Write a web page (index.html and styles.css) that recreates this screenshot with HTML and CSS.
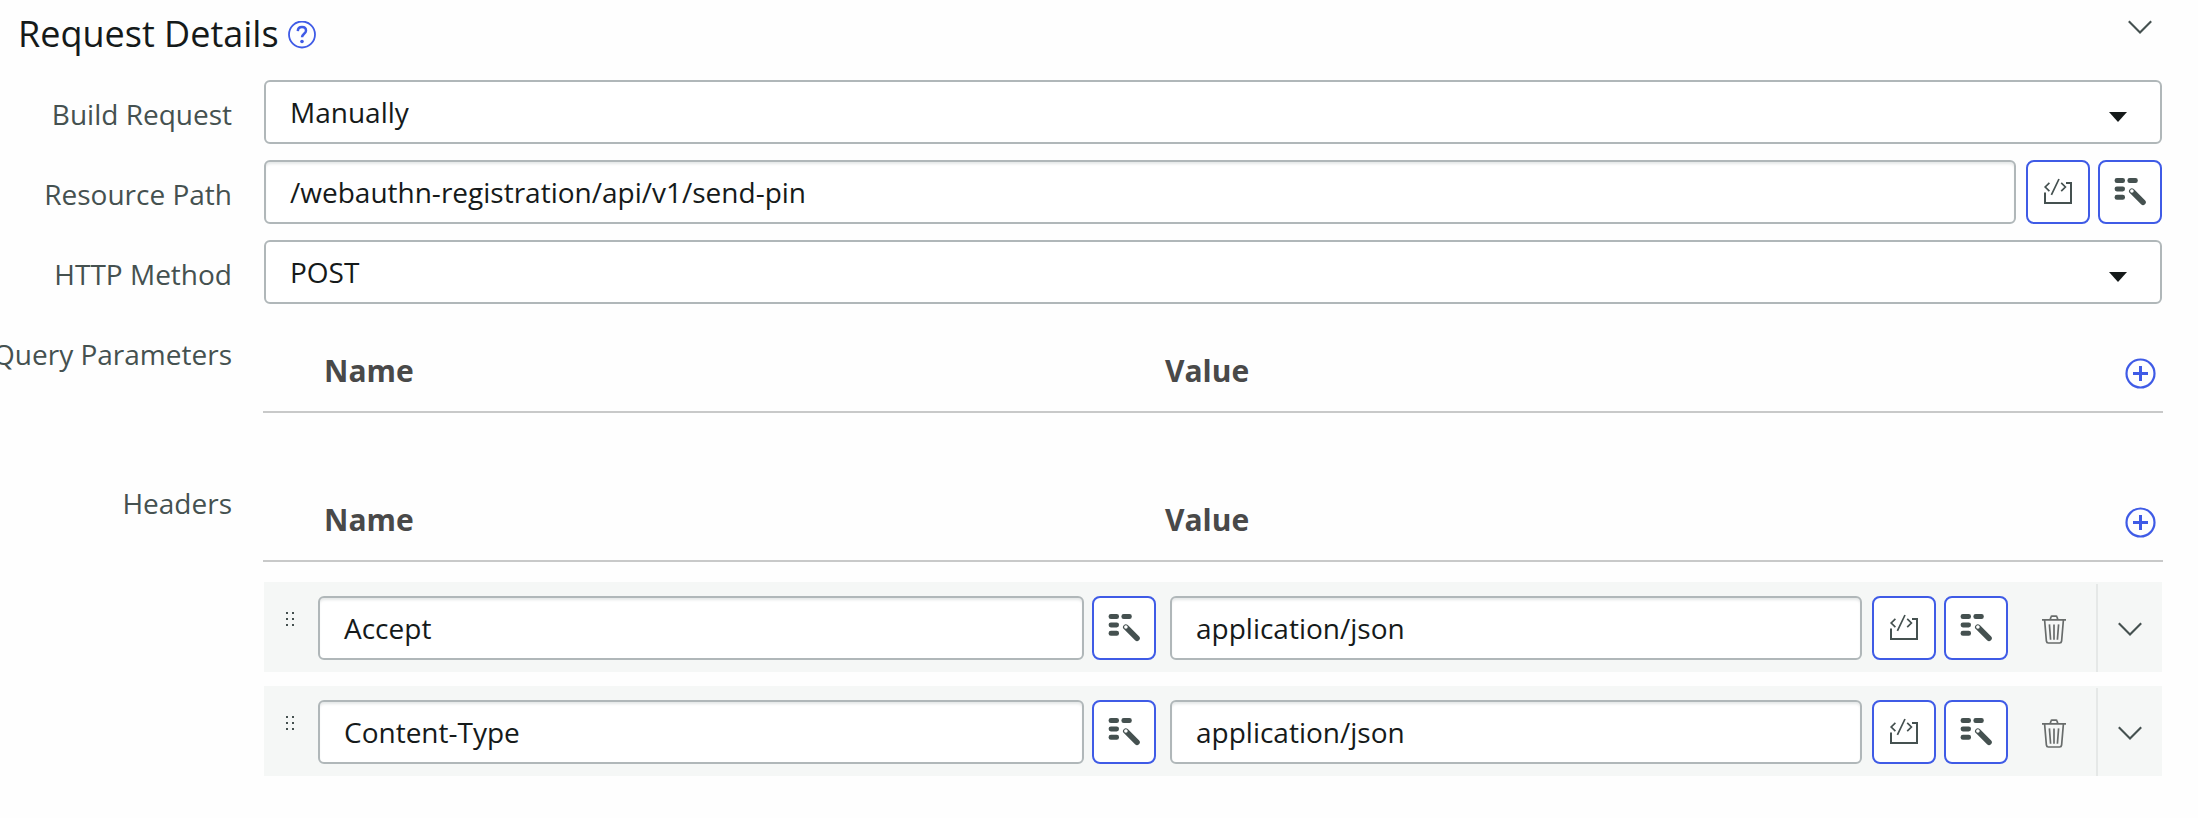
FILE: index.html
```
<!DOCTYPE html>
<html lang="en">
<head>
<meta charset="utf-8">
<title>Request Details</title>
<link rel="stylesheet" href="styles.css">
</head>
<body>
<svg class="sprite" aria-hidden="true">
  <symbol id="code" viewBox="0 0 60 60">
    <path d="M17 30.6V40.9H43V21H38" fill="none" stroke="#455150" stroke-width="2"/>
    <path d="M21.4 20.9L17.2 25L21.4 29.2M33.2 20.9L37.4 25L33.2 29.2M31 17L23.4 32.8" fill="none" stroke="#455150" stroke-width="1.7"/>
  </symbol>
  <symbol id="wand" viewBox="0 0 60 60">
    <g fill="#455150"><rect x="14.6" y="16" width="10.4" height="5" rx="2.3"/><rect x="27.4" y="16" width="10.4" height="5" rx="2.3"/><rect x="14.6" y="24.4" width="10.4" height="5" rx="2.3"/><rect x="14.6" y="32.8" width="10.4" height="5" rx="2.3"/></g>
    <path d="M31.8 29.1L43 40.2" stroke="#455150" stroke-width="5.6" stroke-linecap="round"/>
    <circle cx="31.9" cy="29" r="1.8" fill="#fff"/>
  </symbol>
  <symbol id="chevron" viewBox="0 0 24 14">
    <path d="M0.8 1.3L12 12.4L23.2 1.3" fill="none" stroke="#455150" stroke-width="2.1"/>
  </symbol>
  <symbol id="plus" viewBox="0 0 32 32">
    <circle cx="16.5" cy="16.5" r="14" fill="none" stroke="#3f5be6" stroke-width="2.2"/>
    <path d="M9 16.5H24M16.5 9V24" fill="none" stroke="#3f5be6" stroke-width="3"/>
  </symbol>
  <symbol id="trash" viewBox="0 0 24 30">
    <g fill="none" stroke="#686c6b" stroke-width="1.7"><path d="M0 4.8H24M8.2 4.6L9 2Q9.2 1.2 10 1.2H14Q14.8 1.2 15 2L15.8 4.6M2.6 5L4.4 26.2Q4.6 28 6.4 28H17.6Q19.4 28 19.6 26.2L21.4 5"/><path d="M7.4 9.4L8.6 24.8M12 9.4V24.8M16.6 9.4L15.4 24.8"/></g>
  </symbol>
  <symbol id="grip" viewBox="0 0 8 14">
    <path d="M0 0h2v2H0zM6 0h2v2H6zM0 6h2v2H0zM6 6h2v2H6zM0 12h2v2H0zM6 12h2v2H6z" fill="#455150"/>
  </symbol>
  <symbol id="caret" viewBox="0 0 18 10"><path d="M0 0H18L9 10Z" fill="#151a1a"/></symbol>
</svg>
<main class="panel">
  <header class="panel-head">
    <h1>Request Details</h1>
    <svg class="help" viewBox="0 0 28 28"><circle cx="14" cy="13.5" r="13" fill="none" stroke="#3f5be6" stroke-width="1.8"/><path d="M9.8 10.1C9.9 7.4 11.6 6.1 14 6.1C16.5 6.1 18 7.6 18 9.7C18 12.6 14 12.9 14 16.3" fill="none" stroke="#3f5be6" stroke-width="2.5"/><circle cx="14" cy="20.5" r="1.8" fill="#3f5be6"/></svg>
    <svg class="chevron"><use href="#chevron"/></svg>
  </header>
  <div class="form">
    <label>Build Request</label>
    <div class="select"><span>Manually</span><svg class="caret"><use href="#caret"/></svg></div>
    <label>Resource Path</label>
    <div class="line">
      <div class="input">/webauthn-registration/api/v1/send-pin</div>
      <div class="buttons"><button><svg><use href="#code"/></svg></button><button><svg><use href="#wand"/></svg></button></div>
    </div>
    <label>HTTP Method</label>
    <div class="select"><span>POST</span><svg class="caret"><use href="#caret"/></svg></div>
    <label>Query Parameters</label>
    <section class="table">
      <div class="thead"><b>Name</b><b>Value</b><svg class="plus"><use href="#plus"/></svg></div>
    </section>
    <label>Headers</label>
    <section class="table">
      <div class="thead"><b>Name</b><b>Value</b><svg class="plus"><use href="#plus"/></svg></div>
      <div class="trow">
        <svg class="grip"><use href="#grip"/></svg>
        <div class="input name">Accept</div>
        <button><svg><use href="#wand"/></svg></button>
        <div class="input value">application/json</div>
        <div class="buttons"><button><svg><use href="#code"/></svg></button><button><svg><use href="#wand"/></svg></button></div>
        <svg class="trash"><use href="#trash"/></svg>
        <div class="expand"><svg class="chevron"><use href="#chevron"/></svg></div>
      </div>
      <div class="trow">
        <svg class="grip"><use href="#grip"/></svg>
        <div class="input name">Content-Type</div>
        <button><svg><use href="#wand"/></svg></button>
        <div class="input value">application/json</div>
        <div class="buttons"><button><svg><use href="#code"/></svg></button><button><svg><use href="#wand"/></svg></button></div>
        <svg class="trash"><use href="#trash"/></svg>
        <div class="expand"><svg class="chevron"><use href="#chevron"/></svg></div>
      </div>
    </section>
  </div>
</main>
</body>
</html>
```
FILE: styles.css
```
* { box-sizing: border-box; }
body {
  margin: 0;
  background: #fefefe;
  color: #151a1a;
  font: 28px/38px "Open Sans", "Noto Sans", sans-serif;
  overflow: hidden;
}
svg { display: block; flex: none; }
.sprite { position: absolute; width: 0; height: 0; }
.panel { height: 818px; padding-right: 36px; }
.panel-head { display: flex; height: 80px; padding-left: 18px; }
h1 { margin: 9px 0 0; font-size: 36px; line-height: 50px; font-weight: 400; white-space: nowrap; }
.help { width: 28px; height: 28px; margin: 21px 0 0 9px; }
.chevron { width: 24px; height: 14px; }
.panel-head .chevron { margin: 20px 10px 0 auto; }
.form {
  display: grid;
  grid-template-columns: 232px 1898px;
  grid-template-rows: 64px 64px 64px 133px auto;
  column-gap: 32px;
  row-gap: 16px;
}
label { justify-self: end; padding-top: 15px; color: #455150; white-space: nowrap; }
.select, .input {
  height: 64px;
  border: 2px solid #b0b7b9;
  border-radius: 6px;
  background: #fff;
  padding: 11px 24px;
  white-space: nowrap;
}
.select { display: flex; justify-content: space-between; padding-right: 33px; }
.caret { width: 18px; height: 10px; margin-top: 19px; }
.input { flex: 1; box-shadow: inset 0 3px 3px -1px #e4e7e7; }
.line { display: flex; gap: 10px; }
.buttons { display: flex; gap: 8px; }
button {
  flex: none;
  width: 64px;
  height: 64px;
  padding: 0;
  border: 2px solid #3f5be6;
  border-radius: 8px;
  background: #fff;
}
button svg { width: 60px; height: 60px; }
.thead {
  display: grid;
  grid-template-columns: 841px 1fr 32px;
  height: 93px;
  margin: 0 -1px;
  padding: 30px 7px 0 61px;
  border-bottom: 2px solid #c8c9c9;
  color: #494949;
  font-size: 30px;
  line-height: 42px;
}
.plus { width: 32px; height: 32px; margin-top: 7px; }
.trow { display: flex; height: 90px; margin-top: 20px; padding-top: 14px; background: #f5f7f6; }
.trow + .trow { margin-top: 14px; }
.grip { width: 8px; height: 14px; margin: 16px 24px 0 22px; }
.input.name { flex: 0 0 766px; margin-right: 8px; }
.input.value { flex: 0 0 692px; margin: 0 10px 0 14px; }
.trash { width: 24px; height: 30px; margin: 19px 0 0 34px; }
.expand { width: 66px; height: 88px; margin: -12px 0 0 auto; padding: 38px 0 0 20px; border-left: 2px solid #e5e8e7; }
```
